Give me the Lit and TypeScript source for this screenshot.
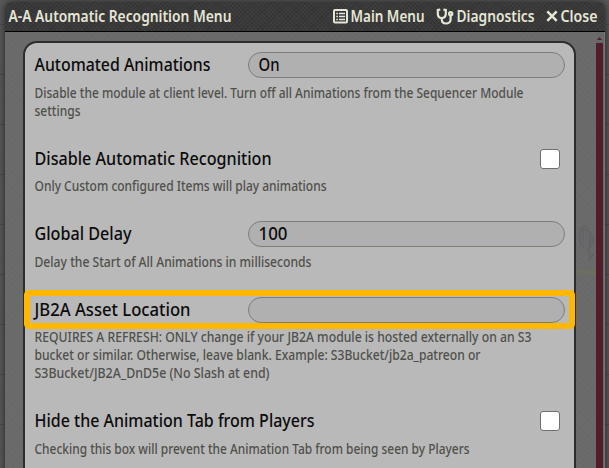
import { LitElement, html, css, svg, nothing } from "lit";
import { customElement, property } from "lit/decorators.js";

@customElement("fit-text")
class FitText extends LitElement {
  @property() text = "";
  @property({ type: Number }) width = 100;
  @property({ type: Number }) size = 14;
  @property({ type: Number }) line = 18;
  @property({ type: Number }) base = 14;

  static styles = css`
    :host { display: block; flex: none; }
    svg { display: block; overflow: visible; }
    text { fill: currentColor; font-family: "Noto Sans", "Open Sans", sans-serif; }
  `;

  render() {
    return html`<svg width=${this.width} height=${this.line}>${svg`<text x="-0.5" y=${this.base}
      font-size=${this.size} textLength=${this.width} lengthAdjust="spacingAndGlyphs">${this.text}</text>`}</svg>`;
  }
}

type Line = [string, number];
interface Setting {
  label: Line;
  kind: "field" | "check";
  value?: Line;
  hint: Line[];
  gap: number;
  marked?: boolean;
}

const SETTINGS: Setting[] = [
  {
    label: ["Automated Animations", 176], kind: "field", value: ["On", 21], gap: 6,
    hint: [["Disable the module at client level. Turn off all Animations from the Sequencer Module", 489], ["settings", 46]],
  },
  { label: ["Disable Automatic Recognition", 237], kind: "check", gap: 5, hint: [["Only Custom configured Items will play animations", 292]] },
  { label: ["Global Delay", 97], kind: "field", value: ["100", 29], gap: 6, hint: [["Delay the Start of All Animations in milliseconds", 277]] },
  {
    label: ["JB2A Asset Location", 156], kind: "field", gap: 5, marked: true,
    hint: [
      ["REQUIRES A REFRESH: ONLY change if your JB2A module is hosted externally on an S3", 497],
      ["bucket or similar. Otherwise, leave blank. Example: S3Bucket/jb2a_patreon or", 446],
      ["S3Bucket/JB2A_DnD5e (No Slash at end)", 235],
    ],
  },
  { label: ["Hide the Animation Tab from Players", 280], kind: "check", gap: 6, hint: [["Checking this box will prevent the Animation Tab from being seen by Players", 435]] },
];

@customElement("app-root")
class AppRoot extends LitElement {
  static styles = css`
    :host {
      display: block; box-sizing: border-box; width: 609px; height: 468px; overflow: hidden;
      padding: 2px 4px 0 5px;
      background:
        repeating-linear-gradient(to bottom, transparent 0 24px, #4e4e4e 24px 25px, transparent 25px 50px),
        #5c5c5c;
    }
    .window {
      box-sizing: border-box; width: 600px; height: 480px; display: flex; flex-direction: column;
      border-radius: 6px 6px 0 0; overflow: hidden; background: #6a6a6a;
    }
    .shade { border-radius: 6px 6px 0 0; box-shadow: 0 0 10px #222; width: 600px; }
    header {
      box-sizing: border-box; height: 30px; flex: none; display: flex; align-items: center;
      padding: 0 7px 0 4px; color: #e6e6d6; border-bottom: 1px solid #000;
      background:
        repeating-linear-gradient(45deg, rgba(0, 0, 0, 0.1) 0 1px, transparent 1px 3px),
        repeating-linear-gradient(-45deg, rgba(0, 0, 0, 0.1) 0 1px, transparent 1px 3px),
        #3d3d3d;
    }
    header fit-text { font-weight: 600; }
    .spacer { flex: 1; }
    .action { display: flex; align-items: center; }
    .action svg { display: block; flex: none; }
    .list { margin-right: 3px; }
    .diag { margin: 0 11px 0 11px; }
    .main { flex: 1; min-height: 0; display: flex; }
    .content {
      width: 591px; flex: none; display: flex; padding: 9px 0 0 18px; box-sizing: border-box;
      background: repeating-linear-gradient(45deg, #686868 0 1px, #6b6b6b 1px 4px);
    }
    .panel {
      box-sizing: border-box; width: 553px; height: 500px; border: 2px solid #2d2d2d; border-radius: 14px;
      background: #b9b9b9; padding: 9px 9px 0 10px; display: flex; flex-direction: column; gap: 26px; flex: none;
    }
    .backdrop { display: block; flex: none; margin-top: 180px; }
    .scroll { width: 9px; flex: none; display: flex; flex-direction: column; background: #686868; box-sizing: border-box; border-right: 1px solid #777; }
    .arrow { width: 5px; height: 3px; margin: 5px 0 3px 1px; background: #571f2e; clip-path: polygon(50% 0, 100% 100%, 0 100%); }
    .thumb { width: 7px; flex: 1; background: #521d2a; }
    .row { position: relative; height: 26px; display: flex; align-items: center; justify-content: space-between; color: #0c0c0c; }
    .row fit-text { font-weight: 500; }
    .field {
      box-sizing: border-box; width: 317px; height: 26px; border: 1px solid #7e7e76; border-radius: 13px;
      background: #b0b0b0; padding-left: 10px; display: flex; align-items: center;
    }
    .check { box-sizing: border-box; width: 20px; height: 20px; border: 1px solid #6f6f6f; border-radius: 3px; background: #fff; margin-right: 5px; }
    .mark { position: absolute; inset: -7px -10px -6px -11px; border: 6px solid #ffb700; border-radius: 5px; pointer-events: none; }
    .hint { color: #50504b; font-weight: 500; }
    .gap5 { margin-top: 5px; }
    .gap6 { margin-top: 6px; }
  `;

  private title(text: string, width: number) {
    return html`<fit-text .text=${text} .width=${width} .size=${16} .line=${29} .base=${20}></fit-text>`;
  }

  private label([text, width]: Line) {
    return html`<fit-text .text=${text} .width=${width} .size=${18.2} .line=${26} .base=${19}></fit-text>`;
  }

  private setting(s: Setting) {
    return html`<section>
      <div class="row">
        ${this.label(s.label)}
        ${s.kind === "field"
          ? html`<div class="field">${s.value ? this.label(s.value) : nothing}</div>`
          : html`<div class="check"></div>`}
        ${s.marked ? html`<div class="mark"></div>` : nothing}
      </div>
      <div class="hint ${s.gap === 5 ? "gap5" : "gap6"}">
        ${s.hint.map(([text, width]) => html`<fit-text .text=${text} .width=${width} .size=${14.2}></fit-text>`)}
      </div>
    </section>`;
  }

  render() {
    return html`<div class="shade"><div class="window">
      <header>
        ${this.title("A-A Automatic Recognition Menu", 223)}
        <div class="spacer"></div>
        <div class="action">
          <svg class="list" width="15" height="15" viewBox="0 0 15 15" fill="none" stroke="#e6e6d6">
            <rect x="1" y="1" width="13" height="12.500" rx="1" stroke-width="2" />
            <path d="M3.300 4.500h1.700M3.300 7.500h1.700M3.300 10.500h1.700M6 4.500H12M6 7.500H12M6 10.500H12" stroke-width="1.4" />
          </svg>
          ${this.title("Main Menu", 74)}
        </div>
        <div class="action diag">
          <svg width="21" height="17" viewBox="0 0 21 17" fill="none" stroke="#e6e6d6" stroke-width="2.2">
            <path d="M4.200 1.600L1.800 2v3.500c0 3 1.600 4.500 4 4.500s4-1.500 4-4.500V2L7.400 1.600" />
            <path d="M5.800 10v1.500c0 2.700 1.700 4 4.200 4s4.600-1.500 4.600-4V7.500" />
            <circle cx="14.700" cy="5.800" r="1.600" />
          </svg>
          ${this.title("Diagnostics", 78)}
        </div>
        <div class="action">
          <svg width="15" height="15" viewBox="0 0 15 15" stroke="#e6e6d6" stroke-width="2.5">
            <path d="M1.300 2.400l9.400 9.400M10.700 2.400l-9.400 9.400" />
          </svg>
          ${this.title("Close", 37)}
        </div>
      </header>
      <div class="main">
        <div class="content">
          <div class="panel">${SETTINGS.map((s) => this.setting(s))}</div>
          <svg class="backdrop" width="20" height="56" viewBox="0 0 20 56" fill="none">
            <path d="M3 9q4-4 9-1q5 5 7 11l-3 7-4 3-5-2-4-6z" fill="#646466" />
            <path d="M5 11l2 13M9 9v18M12 11l-1 17" stroke="#6f6f72" />
            <path d="M11 28q5 4 2 12l5-8M4 7q5-5 10 1" stroke="#606060" />
            <path d="M0 51h20" stroke="#6d6e5e" stroke-width="4" />
          </svg>
        </div>
        <div class="scroll"><div class="arrow"></div><div class="thumb"></div></div>
      </div>
    </div></div>`;
  }
}
